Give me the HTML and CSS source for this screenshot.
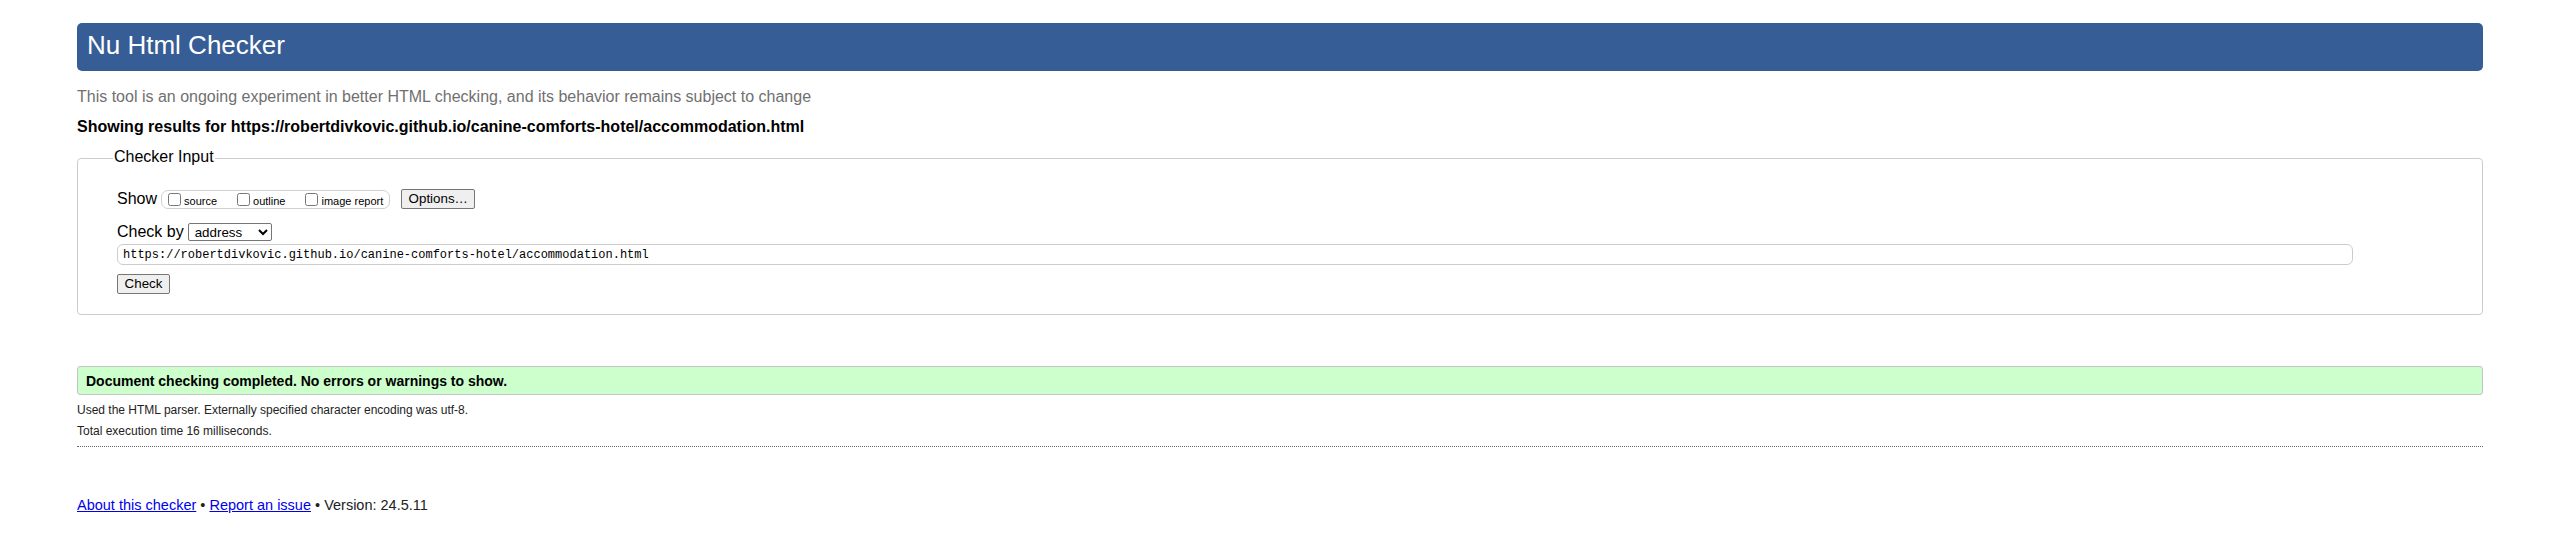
FILE: index.html
```html
<!DOCTYPE html>
<html lang="en">
<head>
<meta charset="utf-8">
<title>Showing results for https://robertdivkovic.github.io/canine-comforts-hotel/accommodation.html - Nu Html Checker</title>
<link rel="stylesheet" href="styles.css">
</head>
<body class="page">
<h1 class="title">Nu Html Checker</h1>
<p class="tagline">This tool is an ongoing experiment in better HTML checking, and its behavior remains subject to change</p>
<p class="showing">Showing results for https://robertdivkovic.github.io/canine-comforts-hotel/accommodation.html</p>
<form class="checker-form" action="#">
  <fieldset class="checker-input">
    <legend class="checker-legend">Checker Input</legend>
    <div class="row show-row">
      <span class="row-label">Show</span>
      <span class="show-group">
        <label class="opt"><input type="checkbox" class="opt-box"><span class="opt-text">source</span></label>
        <label class="opt"><input type="checkbox" class="opt-box"><span class="opt-text">outline</span></label>
        <label class="opt opt-last"><input type="checkbox" class="opt-box"><span class="opt-text">image report</span></label>
      </span>
      <button type="button" class="btn options-btn">Options…</button>
    </div>
    <div class="row checkby-row">
      <span class="row-label">Check by</span>
      <select class="by-select"><option>address</option></select>
    </div>
    <input type="url" class="url-input" value="https://robertdivkovic.github.io/canine-comforts-hotel/accommodation.html">
    <button type="submit" class="btn check-btn">Check</button>
  </fieldset>
</form>
<div class="result success">Document checking completed. No errors or warnings to show.</div>
<p class="details details-first">Used the HTML parser. Externally specified character encoding was utf-8.</p>
<p class="details">Total execution time 16 milliseconds.</p>
<hr class="sep">
<p class="footer"><a class="foot-link" href="#">About this checker</a> • <a class="foot-link" href="#">Report an issue</a> • Version: 24.5.11</p>
</body>
</html>
```
FILE: styles.css
```css
html, body {
  background: #ffffff;
}
.page {
  margin: 0;
  padding: 23px 67px 0 77px;
  font-family: "Liberation Sans", Arial, sans-serif;
  color: #000;
}
.title {
  margin: 0;
  height: 48px;
  box-sizing: border-box;
  padding: 0 10px 4px;
  line-height: 44px;
  font-size: 26px;
  font-weight: normal;
  color: #fff;
  background: #365d95;
  border-radius: 5px;
}
.tagline {
  margin: 16px 0 0;
  font-size: 16px;
  line-height: 20px;
  color: #707070;
}
.showing {
  margin: 10px 0 0;
  font-size: 16px;
  line-height: 20px;
  font-weight: bold;
}
.checker-form {
  margin: 10px 0 0;
}
.checker-input {
  margin: 0;
  padding: 19px 40px 20px 39px;
  border: 1px solid #cccccc;
  border-radius: 4px;
  min-width: 0;
}
.checker-legend {
  font-size: 16px;
  line-height: 20px;
  padding: 0 1px 3px;
  margin-left: -4px;
  color: #000;
}
.row {
  display: flex;
  align-items: center;
  height: 20px;
  font-size: 16px;
}
.row-label {
  line-height: 20px;
}
.show-group {
  display: flex;
  align-items: center;
  box-sizing: border-box;
  height: 19px;
  margin-left: 4px;
  padding: 0 6px 0 2px;
  border: 1px solid #d0d0d0;
  border-radius: 7px;
}
.opt {
  display: flex;
  align-items: center;
  font-size: 11px;
  margin-right: 16px;
}
.opt-last {
  margin-right: 0;
}
.opt-box {
  margin: 0 3px 0 4px;
  width: 13px;
  height: 13px;
}
.opt-text {
  padding-top: 3px;
}
.btn {
  font-family: "Liberation Sans", Arial, sans-serif;
  font-size: 13.333px;
  color: #000;
  background: #efefef;
  border: 1px solid #767676;
  border-radius: 2px;
  padding: 1px 6px;
  height: 20px;
  box-sizing: border-box;
  line-height: 16px;
}
.options-btn {
  margin-left: 11px;
  width: 74px;
}
.checkby-row {
  margin-top: 13px;
}
.by-select {
  margin-left: 4px;
  width: 84px;
  height: 18px;
  font-family: "Liberation Sans", Arial, sans-serif;
  font-size: 13.333px;
  color: #000;
  border: 1px solid #767676;
  border-radius: 2px;
  background: #fff;
  padding: 0 0 0 2px;
}
.url-input {
  display: block;
  box-sizing: border-box;
  margin: 2px 89px 0 0;
  width: calc(100% - 89px);
  height: 21px;
  padding: 0 5px;
  border: 1px solid #cccccc;
  border-radius: 6px;
  font-family: "Liberation Mono", "Courier New", monospace;
  font-size: 12px;
  color: #000;
  background: #fff;
}
.check-btn {
  display: block;
  margin-top: 9px;
  width: 53px;
}
.result {
  margin-top: 51px;
  padding: 6px 8px 4px;
  border: 1px solid #c4c4c4;
  border-radius: 3px;
  font-size: 14px;
  line-height: 17px;
  font-weight: bold;
}
.success {
  background: #ccffcc;
}
.details {
  margin: 7px 0 0;
  font-size: 12px;
  line-height: 14px;
  color: #222;
}
.details-first {
  margin-top: 8px;
}
.sep {
  margin: 8px 0 0;
  height: 0;
  border: 0;
  border-top: 1px dotted #666;
}
.footer {
  margin: 50px 0 0;
  font-size: 14.5px;
  line-height: 17px;
  color: #222;
}
.foot-link {
  color: #0000ee;
}
```
